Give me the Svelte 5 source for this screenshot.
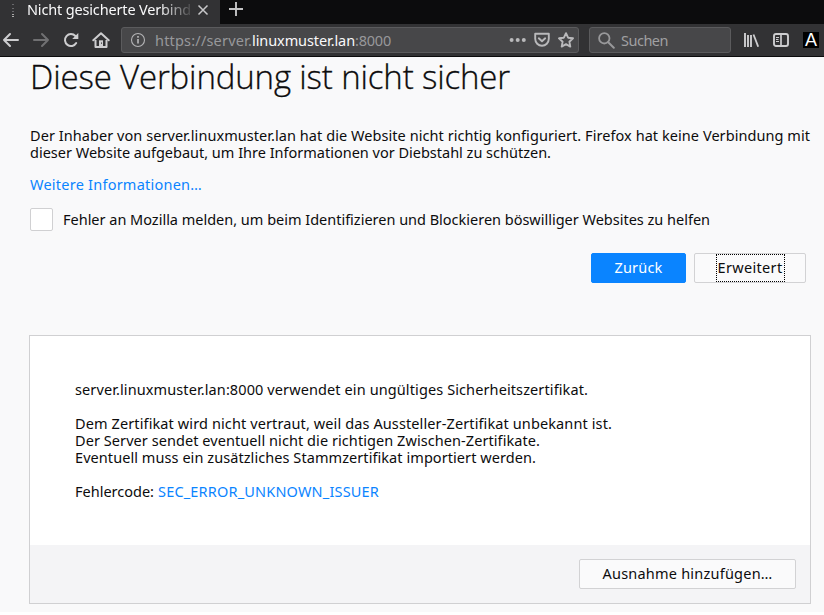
<script>
  // Spreads a line of text over a given width by adjusting its tracking.
  function fit(node, width) {
    node.style.letterSpacing = '0px';
    const natural = node.getBoundingClientRect().width;
    const count = node.textContent.length;
    node.style.letterSpacing = `${(width - natural) / count}px`;
  }

  const intro = [
    ['Der Inhaber von server.linuxmuster.lan hat die Website nicht richtig konfiguriert. Firefox hat keine Verbindung mit', 780],
    ['dieser Website aufgebaut, um Ihre Informationen vor Diebstahl zu schützen.', 521]
  ];
  const details = [
    ['Dem Zertifikat wird nicht vertraut, weil das Aussteller-Zertifikat unbekannt ist.', 537],
    ['Der Server sendet eventuell nicht die richtigen Zwischen-Zertifikate.', 465],
    ['Eventuell muss ein zusätzliches Stammzertifikat importiert werden.', 461]
  ];
</script>

<div class="window">
  <header class="tabs">
    <div class="tab">
      <svg class="favicon" width="4" height="16" viewBox="0 0 4 16"><path d="M1 1.5h2M1 5.5h2M1 8.5h2" stroke="#68686b" /><path d="M1 11.5h2M1 13.5h2" stroke="#aaa" /></svg>
      <div class="title"><span use:fit={164}>Nicht gesicherte Verbind</span></div>
      <svg class="close" width="12" height="12" viewBox="0 0 12 12"><path d="M1.5 1.5l9 9M10.5 1.5l-9 9" stroke="#c8c8ca" stroke-width="1.5" /></svg>
    </div>
    <svg class="plus" width="16" height="16" viewBox="0 0 16 16"><path d="M8 1v14M1 8h14" stroke="#c4c4c5" stroke-width="1.9" /></svg>
  </header>

  <nav class="toolbar">
    <div class="navicons">
      <svg width="18" height="16" viewBox="0 0 18 16"><path d="M16 8H2M8 2L2 8l6 6" fill="none" stroke="#cdcdcf" stroke-width="2" stroke-linecap="round" stroke-linejoin="round" /></svg>
      <svg width="18" height="16" viewBox="0 0 18 16"><path d="M2 8h14M10 2l6 6-6 6" fill="none" stroke="#707072" stroke-width="2" stroke-linecap="round" stroke-linejoin="round" /></svg>
      <svg width="16" height="16" viewBox="0 0 16 16"><path d="M13.2 11A6 6 0 1 1 12.4 4" fill="none" stroke="#cdcdcf" stroke-width="2" stroke-linecap="round" /><path d="M15.3 1v6H9.2z" fill="#cdcdcf" /></svg>
      <svg width="18" height="16" viewBox="0 0 18 16"><path d="M1.3 8.3L9 1.3l7.7 7" fill="none" stroke="#cdcdcf" stroke-width="2" stroke-linecap="round" stroke-linejoin="round" /><path d="M3.5 8v7h11V8" fill="none" stroke="#cdcdcf" stroke-width="2" stroke-linejoin="round" /><path d="M7 8.3h4V15H7z" fill="#cdcdcf" /><path d="M9 10.5h1v1.3H9z" fill="#323234" /></svg>
    </div>
    <div class="url">
      <svg width="16" height="16" viewBox="0 0 16 16"><circle cx="8" cy="8" r="6.5" fill="none" stroke="#b4b4b6" stroke-width="1.1" /><path d="M8 7v4.5M8 4v1.7" stroke="#b4b4b6" stroke-width="1.7" /></svg>
      <div class="address"><span use:fit={97}>https://server.</span><b use:fit={103}>linuxmuster.lan</b><span use:fit={36}>:8000</span></div>
      <svg width="17" height="16" viewBox="0 0 17 16"><g fill="#b9b9bb"><circle cx="2.6" cy="8" r="2" /><circle cx="8.7" cy="8" r="2" /><circle cx="14.8" cy="8" r="2" /></g></svg>
      <svg class="pocket" width="16" height="16" viewBox="0 0 16 16"><path d="M1.2 1.8h13.6v5a6.8 7 0 0 1-13.6 0z" fill="none" stroke="#b9b9bb" stroke-width="1.9" stroke-linejoin="round" /><path d="M4.8 6.3L8 9.3l3.2-3" fill="none" stroke="#b9b9bb" stroke-width="1.9" stroke-linecap="round" stroke-linejoin="round" /></svg>
      <svg class="star" width="16" height="16" viewBox="0 0 16 16"><path d="M8 1.2l2.1 4.5 4.9.6-3.6 3.4.9 4.9L8 12.2l-4.3 2.4.9-4.9L1 6.3l4.9-.6z" fill="none" stroke="#b9b9bb" stroke-width="1.9" stroke-linejoin="round" /></svg>
    </div>
    <div class="search">
      <svg width="17" height="17" viewBox="0 0 17 17"><circle cx="6.3" cy="6.3" r="5.2" fill="none" stroke="#98989a" stroke-width="1.8" /><path d="M10.2 10.2l5.6 5.6" stroke="#98989a" stroke-width="2" stroke-linecap="round" /></svg>
      <span use:fit={47}>Suchen</span>
    </div>
    <div class="tools">
      <svg width="16" height="16" viewBox="0 0 16 16"><path d="M2 1v14M5 3v12M8 3v12" fill="none" stroke="#cdcdcf" stroke-width="1.9" /><path d="M10.5 2.5l4.7 12.2" stroke="#cdcdcf" stroke-width="1.8" /></svg>
      <svg width="16" height="16" viewBox="0 0 16 16"><rect x="1" y="2" width="14" height="12" rx="2" fill="none" stroke="#cdcdcf" stroke-width="1.9" /><path d="M8 2v12" stroke="#cdcdcf" stroke-width="1.7" /><path d="M3 5.5h3M3 7.5h2.5M3 9.5h3" stroke="#cdcdcf" /></svg>
      <div class="ext">A</div>
    </div>
  </nav>

  <main>
    <h1><span use:fit={480}>Diese Verbindung ist nicht sicher</span></h1>
    <div class="intro">
      {#each intro as [text, width]}
        <div class="line"><span use:fit={width}>{text}</span></div>
      {/each}
    </div>
    <div class="line more"><a href="#more" use:fit={172}>Weitere Informationen…</a></div>
    <div class="report">
      <i class="box"></i>
      <span use:fit={647}>Fehler an Mozilla melden, um beim Identifizieren und Blockieren böswilliger Websites zu helfen</span>
    </div>
    <div class="actions">
      <div class="btn primary"><span use:fit={48}>Zurück</span></div>
      <div class="btn advanced"><span class="focus"><span use:fit={65}>Erweitert</span></span></div>
    </div>
    <section class="panel">
      <div class="info">
        <div class="line"><span use:fit={513}>server.linuxmuster.lan:8000 verwendet ein ungültiges Sicherheitszertifikat.</span></div>
        <div class="para">
          {#each details as [text, width]}
            <div class="line"><span use:fit={width}>{text}</span></div>
          {/each}
        </div>
        <div class="line code"><span use:fit={79}>Fehlercode:</span><a href="#code" use:fit={221}>SEC_ERROR_UNKNOWN_ISSUER</a></div>
      </div>
      <footer>
        <div class="btn exception"><span use:fit={170}>Ausnahme hinzufügen…</span></div>
      </footer>
    </section>
  </main>
</div>

<style>
  :global(body) { background: #fff; overflow: hidden; }
  .window { width: 824px; height: 612px; display: flex; flex-direction: column; background: #f9f9fa; color: #0c0c0d; font: 14.5px/17px "Noto Sans", "Open Sans", sans-serif; }
  .window * { box-sizing: border-box; }
  svg { flex: none; display: block; }
  span, a, b { display: inline-block; white-space: pre; }
  .tabs { height: 24px; flex: none; display: flex; background: #0c0c0d; }
  .tab { width: 220px; display: flex; background: #323234; padding-left: 11px; color: #f9f9fa; }
  .favicon { margin-top: 3px; }
  .title { width: 165px; margin-left: 12px; padding-top: 1px; overflow: hidden; -webkit-mask-image: linear-gradient(90deg, #000 132px, transparent 168px); mask-image: linear-gradient(90deg, #000 132px, transparent 168px); }
  .close { margin: 4px 0 0 5px; }
  .plus { margin: 1px 0 0 8px; }
  .toolbar { height: 33px; flex: none; display: flex; align-items: flex-start; background: #323234; border-bottom: 1px solid #0c0c0d; }
  .navicons { width: 121px; display: flex; gap: 12px; padding: 8px 0 0 2px; }
  .navicons svg:nth-child(3) { margin-left: 1px; }
  .navicons svg:nth-child(4) { margin-left: 1px; }
  .url, .search { height: 26px; margin-top: 3px; display: flex; align-items: center; background: #474749; border: 1px solid #5b5b5d; border-radius: 3px; }
  .url { width: 458px; padding: 0 4px 0 8px; }
  .address { flex: 1; display: flex; margin-left: 9px; color: #98989b; }
  .address b { font-weight: 400; color: #f9f9fa; }
  .pocket { margin-left: 8px; }
  .star { margin-left: 8px; }
  .search { width: 142px; margin-left: 10px; padding-left: 8px; color: #a0a0a2; gap: 6px; }
  .tools { display: flex; gap: 14px; padding: 8px 0 0 12px; }
  .ext { width: 16px; height: 16px; background: #000; color: #fff; font: 18px/17px "Liberation Sans", Arial, sans-serif; text-align: center; flex: none; }
  main { flex: 1; display: flex; flex-direction: column; padding: 0 13px 0 30px; }
  h1 { margin: 0; height: 70px; font: 300 33px/40px "Open Sans", "Noto Sans", sans-serif; -webkit-text-stroke: 0.3px #0c0c0d; }
  .line { height: 17px; white-space: nowrap; }
  a { color: #0a84ff; text-decoration: none; }
  .more { margin-top: 15px; }
  .report { height: 23px; display: flex; align-items: center; margin-top: 15px; gap: 10px; }
  .box { width: 23px; height: 23px; background: #fff; border: 1px solid #d0d0d2; border-radius: 2px; }
  .actions { display: flex; justify-content: flex-end; gap: 8px; margin-top: 22px; padding-right: 5px; }
  .btn { height: 30px; display: flex; align-items: center; justify-content: center; background: #fafafb; border: 1px solid #d2d2d4; border-radius: 2px; padding-bottom: 2px; }
  .primary { width: 95px; background: #0a84ff; border-color: #0a84ff; color: #fff; }
  .advanced { width: 112px; padding-bottom: 0; }
  .focus { height: 28px; padding: 4px 1px 5px; border: 1px dotted #000; }
  .panel { width: 782px; height: 269px; margin: 52px 0 0 -1px; border: 1px solid #d0d0d2; background: #fff; display: flex; flex-direction: column; }
  .info { flex: 1; padding: 45px 0 0 45px; }
  .para { margin: 17px 0; }
  .code { display: flex; gap: 4px; }
  footer { height: 58px; display: flex; justify-content: flex-end; padding: 14px 14px 0 0; background: #f4f4f6; }
  .exception { width: 217px; }
</style>
